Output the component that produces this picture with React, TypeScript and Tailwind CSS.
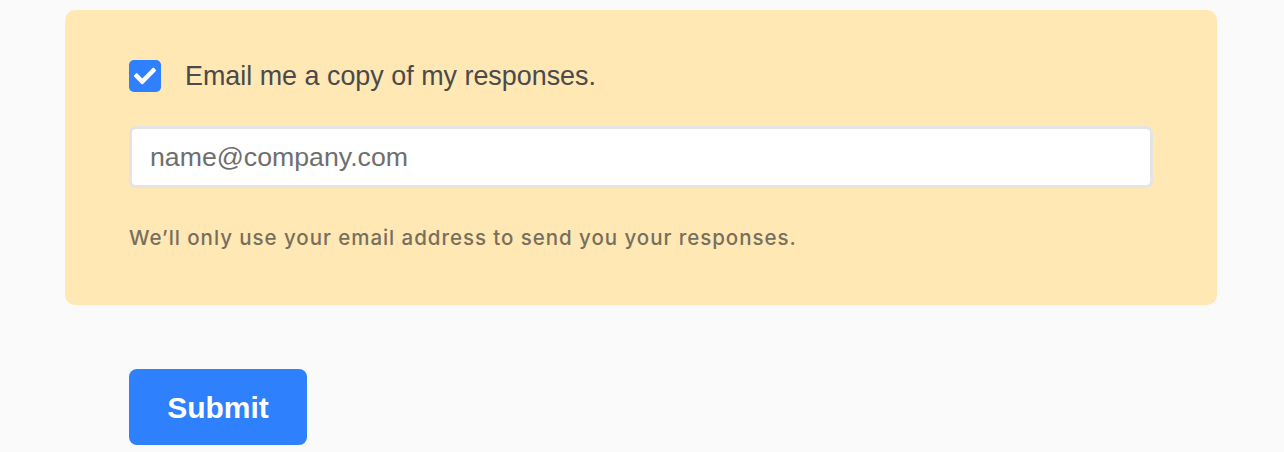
export default function App() {
    return (
        <div className="min-h-[452px] bg-[#fafafa] pt-[10px] pl-[65px] font-['Liberation_Sans',Arial,sans-serif]">
            <section className="w-[1152px] rounded-[10px] bg-[#ffe8b4] px-16 pt-[50px] pb-[53px]">
                <label className="flex items-center gap-6 text-[26.9px] leading-8 text-[#4a4a4a]">
                    <span className="flex h-8 w-8 items-center justify-center rounded-[5px] bg-[#2f80fd]">
                        <svg viewBox="0 0 512 512" className="h-[22px] w-[22px]" fill="white">
                            <path d="M173.9 439.4l-166.4-166.4c-10-10-10-26.2 0-36.2l36.2-36.2c10-10 26.2-10 36.2 0L192 312.7 432.1 72.6c10-10 26.2-10 36.2 0l36.2 36.2c10 10 10 26.2 0 36.2l-294.4 294.4c-10 10-26.2 10-36.2 0z" />
                        </svg>
                    </span>
                    Email me a copy of my responses.
                </label>
                <input
                    type="email"
                    placeholder="name@company.com"
                    className="mt-[34px] block h-[62px] w-[1024px] rounded-[7px] border-[3px] border-[#e4e4e4] bg-white px-[18px] text-[26.7px] text-[#333] placeholder:text-[#6e6e6e] outline-none"
                />
                <p className="mt-[36px] font-['Inter',sans-serif] text-[20.5px] leading-7 font-medium tracking-[0.95px] text-[#776f5d]">
                    We’ll only use your email address to send you your responses.
                </p>
            </section>
            <div className="pl-16 pt-16">
                <button className="h-[76px] w-[178px] rounded-[8px] bg-[#2f80fd] text-[30px] font-bold text-white">
                    Submit
                </button>
            </div>
        </div>
    );
}
